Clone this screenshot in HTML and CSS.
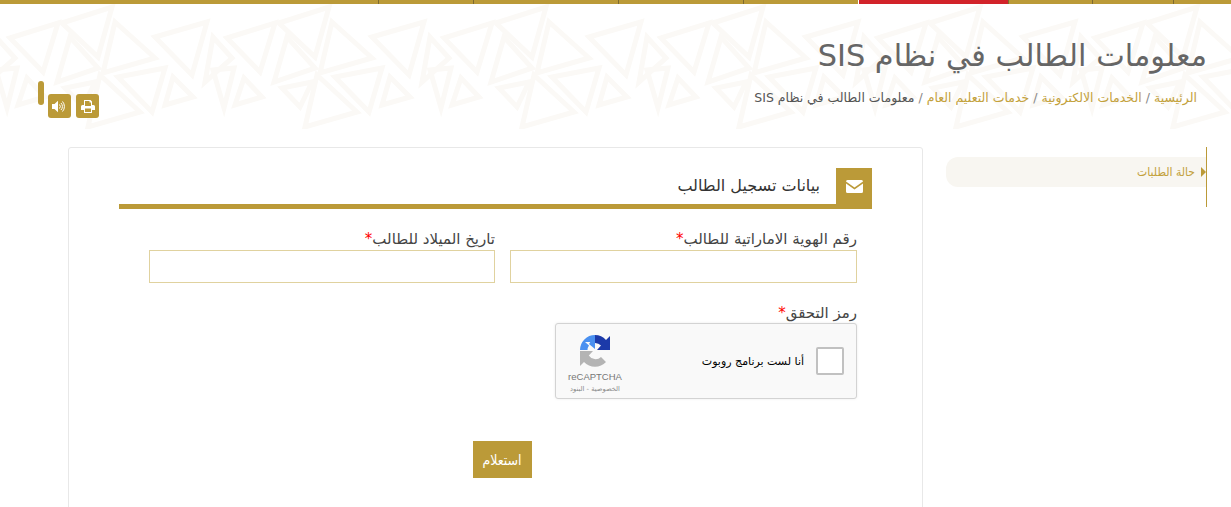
FILE: index.html
```html
<!DOCTYPE html>
<html lang="ar" dir="rtl">
<head>
<meta charset="utf-8">
<title>معلومات الطالب في نظام SIS</title>
<link rel="stylesheet" href="styles.css">
</head>
<body>
<nav class="topbar">
  <span class="seg seg-1"></span><span class="seg seg-2"></span><span class="seg seg-3"></span><span class="seg seg-red"></span><span class="seg seg-5"></span><span class="seg seg-6"></span><span class="seg seg-7"></span><span class="seg seg-8"></span><span class="seg seg-9"></span>
</nav>
<header class="page-head">
  <svg class="pattern" width="1231" height="132" aria-hidden="true">
    <defs>
      <pattern id="tri" width="217" height="132" patternUnits="userSpaceOnUse">
        <g fill="none" stroke="#fbf9f6" stroke-width="5">
          <path d="M10 38L58 23L43 72Z"/><path d="M62 23L112 7L98 57Z"/><path d="M70 37L98 68L57 82Z"/><path d="M115 22L155 58L103 73Z"/><path d="M155 37L207 22L192 75Z"/>
          <path d="M100 75L140 112L88 127Z"/><path d="M118 77L165 68L152 112Z"/><path d="M173 77L193 97L165 105Z"/><path d="M-4 70L17 68L7 108Z"/><path d="M27 78L45 97L18 105Z"/><path d="M95 82L65 88L83 107Z"/>
          <path d="M213 37L232 58L205 82Z"/><path d="M-4 37L15 58L-12 82Z"/><path d="M213 70L234 68L224 108Z"/>
        </g>
      </pattern>
    </defs>
    <rect width="1231" height="132" fill="url(#tri)"/>
  </svg>
  <div class="head-text">
    <h1 class="title">معلومات الطالب في نظام SIS</h1>
    <p class="crumbs"><a>الرئيسية</a><i>/</i><a>الخدمات الالكترونية</a><i>/</i><a>خدمات التعليم العام</a><i>/</i><span>معلومات الطالب في نظام SIS</span></p>
  </div>
  <div class="tools">
    <button class="tool" aria-label="طباعة">
      <svg width="14" height="13" viewBox="0 0 14 13"><path fill="#fff" fill-rule="evenodd" d="M3 0h6.500L11 1.500V5h1.500A1.500 1.500 0 0 1 14 6.500V10h-3v3H3v-3H0V6.500A1.500 1.500 0 0 1 1.500 5H3zM4 1v5h6V2.500H8.500V1zM4 8.500V12h6V8.500z"/></svg>
    </button>
    <button class="tool" aria-label="صوت">
      <svg width="15" height="13" viewBox="0 0 15 13"><path fill="#fff" d="M0 4h2.500L6 .8v11.400L2.500 9H0z"/><g fill="none" stroke="#fff" stroke-width="1"><path d="M7.500 4.500a3 3 0 0 1 0 4"/><path d="M9 3a5 5 0 0 1 0 7"/><path d="M10.500 1.500a7.500 7.500 0 0 1 0 10"/></g></svg>
    </button>
    <span class="grip"></span>
  </div>
</header>
<main class="layout">
  <aside class="side">
    <a class="side-item"><span class="side-arrow"></span>حالة الطلبات</a>
  </aside>
  <section class="card">
    <div class="sec-head">
      <span class="sec-icon">
        <svg width="17" height="13" viewBox="0 0 17 13"><path fill="#fff" d="M0 1.500A1.500 1.500 0 0 1 1.500 0h14A1.500 1.500 0 0 1 17 1.500L8.500 7.500L0 1.500z"/><path fill="#fff" d="M0 3.500L8.500 9.500L17 3.500V11.500A1.500 1.500 0 0 1 15.500 13h-14A1.500 1.500 0 0 1 0 11.500z"/></svg>
      </span>
      <h2 class="sec-title">بيانات تسجيل الطالب</h2>
    </div>
    <form class="form">
      <div class="row">
        <label class="field"><span class="lab">رقم الهوية الاماراتية للطالب<b>*</b></span><input class="input" type="text"></label>
        <label class="field field-end"><span class="lab">تاريخ الميلاد للطالب<b>*</b></span><input class="input" type="text"></label>
      </div>
      <div class="captcha-field">
        <span class="lab">رمز التحقق<b>*</b></span>
        <div class="captcha">
          <span class="check"></span>
          <span class="robot">أنا لست برنامج روبوت</span>
          <div class="brand">
            <svg width="30" height="32" viewBox="0 0 30 32">
              <path fill="#1c3aa9" d="M15 0A15 15 0 0 1 26 5L30 1V15H17L21 10.500A8 8 0 0 0 15 8Z"/>
              <path fill="#4a90f0" d="M15 0A15 15 0 0 0 0 15H7.500A8 8 0 0 1 9 10.500L5 7L15 7Z"/>
              <path fill="#4a90f0" d="M15 0V14L9 9Z"/>
              <path fill="#b4b4b4" d="M0 16H13L8.800 20.500A8 8 0 0 0 21 22L26 27A15 15 0 0 1 4 27L0 31Z"/>
            </svg>
            <span class="brand-name">reCAPTCHA</span>
            <span class="brand-links">الخصوصية - البنود</span>
          </div>
        </div>
      </div>
      <div class="actions"><button class="submit" type="button">استعلام</button></div>
    </form>
  </section>
</main>
</body>
</html>
```
FILE: styles.css
```css
* { box-sizing: border-box; }
html, body { margin: 0; height: 507px; overflow: hidden; background: #fff; }
body { font-family: "DejaVu Sans", sans-serif; color: #555; }

.topbar { display: flex; height: 4px; background: #bb9a38; }
.seg { display: block; height: 4px; background: #bb9a38; border-left: 1px solid #7d6a30; }
.seg-1 { width: 58px; }
.seg-2 { width: 81px; }
.seg-3 { width: 84px; }
.seg-red { width: 150px; background: #d2232a; border-left-color: #fff; }
.seg-5 { width: 115px; }
.seg-6 { width: 125px; }
.seg-7 { width: 145px; }
.seg-8 { width: 95px; }
.seg-9 { flex: 1; border-left: 0; }

.page-head { position: relative; display: flex; justify-content: space-between; height: 125px; padding: 0 24px 0 0; overflow: hidden; }
.pattern { position: absolute; top: -4px; left: 0; }
.head-text { position: relative; }
.title { margin: 33px 0 0; font-size: 30.400px; line-height: 38px; font-weight: 400; color: #666; }
.crumbs { margin: 14px 10px 0 0; font-size: 12.500px; line-height: 17px; color: #555; }
.crumbs a { color: #c3a13c; }
.crumbs i { font-style: normal; margin: 0 4px; color: #888; }

.tools { position: relative; display: flex; gap: 5px; align-items: flex-start; margin: 77px 0 0 38px; }
.tool { display: flex; align-items: center; justify-content: center; width: 23px; height: 24px; margin-top: 13px; padding: 0; border: 0; border-radius: 3px; background: #bb9a38; }
.grip { width: 6px; height: 24px; margin-right: -1px; border-radius: 3px; background: #bb9a38; }

.layout { display: flex; align-items: flex-start; padding: 18px 24px 0 0; }
.side { position: relative; flex: none; width: 261px; height: 60px; margin-left: 23px; padding-top: 10px; border-right: 1px solid #bb9a38; }
.side-item { position: relative; display: block; height: 30px; padding: 0 11px 0 0; border-radius: 12px 0 0 12px; background: #f8f6f1; color: #c3a13c; font-family: "DejaVu Sans Condensed", "DejaVu Sans", sans-serif; font-stretch: condensed; font-size: 12px; line-height: 31px; }
.side-arrow { position: absolute; top: 10px; right: 0; border: 5px solid transparent; border-right-width: 0; border-left-color: #bb9a38; border-left-width: 5px; }

.card { flex: none; width: 855px; height: 380px; padding: 20px 50px 0; border: 1px solid #e8e8e8; border-radius: 3px; background: #fff; }
.sec-head { display: flex; align-items: stretch; height: 41px; border-bottom: 5px solid #bb9a38; }
.sec-icon { display: flex; align-items: center; justify-content: center; width: 36px; background: #bb9a38; }
.sec-title { margin: 0; padding: 0 16px 0 0; font-size: 16px; line-height: 36px; font-weight: 400; color: #333; }

.form { padding: 20px 15px 0 30px; }
.row { display: flex; gap: 15px; }
.field { display: flex; flex: none; flex-direction: column; width: 347px; }
.field-end { width: 346px; }
.lab { display: block; height: 21px; font-size: 15px; line-height: 20px; color: #444; }
.lab b { color: #f00; font-weight: 400; }
.input { height: 33px; padding: 0 8px; border: 1px solid #e0d29f; background: #fff; }

.captcha-field { margin-top: 20px; }
.captcha { display: flex; align-items: center; width: 302px; height: 76px; margin-top: -1px; padding: 0 12px 0 7px; border: 1px solid #d3d3d3; border-radius: 3px; background: #f9f9f9; box-shadow: 0 0 3px rgba(0,0,0,.08); }
.check { flex: none; width: 28px; height: 28px; border: 2px solid #c1c1c1; border-radius: 2px; background: #fff; }
.robot { flex: 1; padding-right: 12px; font-family: "DejaVu Sans", sans-serif; font-size: 11px; color: #000; }
.brand { display: flex; flex-direction: column; align-items: center; width: 70px; padding: 6px 6px 0 0; }
.brand-name { margin-top: 4px; font-family: "Liberation Sans", sans-serif; font-size: 9.500px; line-height: 11px; color: #777; }
.brand-links { margin-top: 3px; font-size: 6.700px; line-height: 9px; color: #888; }

.actions { display: flex; justify-content: center; margin: 42px 0 0 -2px; }
.submit { width: 59px; height: 37px; padding: 0; border: 0; background: #bb9a38; color: #fff; font-family: "DejaVu Sans Condensed", "DejaVu Sans", sans-serif; font-stretch: condensed; font-size: 14px; }
```
